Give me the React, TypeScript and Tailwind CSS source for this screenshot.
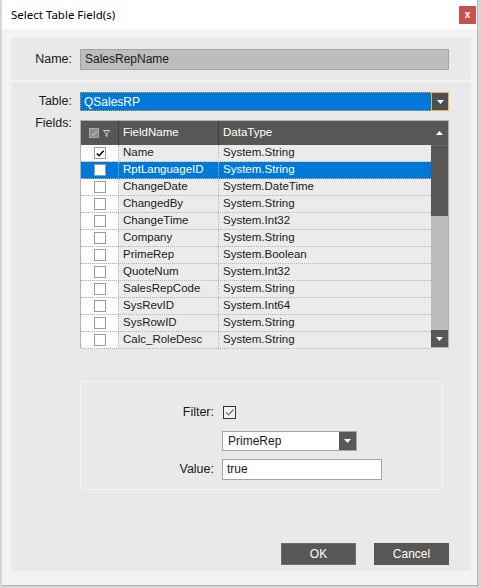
import React from 'react';

const rows: [string, string][] = [
  ['Name', 'System.String'],
  ['RptLanguageID', 'System.String'],
  ['ChangeDate', 'System.DateTime'],
  ['ChangedBy', 'System.String'],
  ['ChangeTime', 'System.Int32'],
  ['Company', 'System.String'],
  ['PrimeRep', 'System.Boolean'],
  ['QuoteNum', 'System.Int32'],
  ['SalesRepCode', 'System.String'],
  ['SysRevID', 'System.Int64'],
  ['SysRowID', 'System.String'],
  ['Calc_RoleDesc', 'System.String'],
];

const Check = ({ color = '#000', w = 1.6 }: { color?: string; w?: number }) => (
  <svg width="11" height="11" viewBox="0 0 11 11" className="block">
    <path d="M2 5.5 L4.5 8 L9.5 2.5" fill="none" stroke={color} strokeWidth={w} />
  </svg>
);

const Tri = ({ up = false }: { up?: boolean }) => (
  <svg width="7" height="4" viewBox="0 0 7 4" className="block">
    <path d={up ? 'M0 4 L3.5 0 L7 4 Z' : 'M0 0 L7 0 L3.5 4 Z'} fill="#fff" />
  </svg>
);

const Box = ({ checked }: { checked?: boolean }) => (
  <div className="w-[12px] h-[12px] bg-white border border-[#9a9a9a] flex items-center justify-center">
    {checked && <Check />}
  </div>
);

export default function App() {
  return (
    <div className="w-[481px] h-[588px] bg-[#d6d6d6] pl-[2px] font-['Liberation_Sans',Arial,sans-serif] text-[#1a1a1a]">
      <div className="w-[476px] h-[586px] bg-[#f3f3f5] border-r border-b border-[#b5b5b5] flex flex-col">
        {/* title bar */}
        <div className="h-[29px] bg-white flex items-center justify-between pl-[9px] pr-[1px] shrink-0">
          <span className="text-[11.5px] font-['Noto_Sans',sans-serif] text-black">Select Table Field(s)</span>
          <div className="w-[17px] h-[18px] bg-[#c85050] flex items-center justify-center text-white text-[10px] font-bold leading-none">x</div>
        </div>

        <div className="pl-[9px] pt-[9px] flex flex-col gap-[2px]">
          {/* name panel */}
          <div className="w-[460px] h-[42px] bg-[#e9e9e9] rounded-[3px] flex items-center">
            <span className="w-[61px] text-right text-[12.5px]">Name:</span>
            <div className="ml-[8px] w-[369px] h-[21px] bg-[#bdbdbd] border border-[#a3a3a3] flex items-center pl-[4px] text-[12px]">
              SalesRepName
            </div>
          </div>

          {/* main panel */}
          <div className="w-[460px] h-[489px] bg-[#e9e9e9] rounded-[3px] flex flex-col pt-[10px] pb-[6px]">
            <div className="flex items-center">
              <span className="w-[61px] text-right text-[12.5px]">Table:</span>
              <div className="ml-[8px] w-[369px] h-[19px] bg-[#0078d7] border border-dotted border-[#e0a040] flex items-center justify-between text-white text-[12px]">
                <span className="pl-[3px]">QSalesRP</span>
                <div className="w-[18px] h-[19px] -mr-px bg-[#4f4f4f] border border-[#e6b450] flex items-center justify-center">
                  <Tri />
                </div>
              </div>
            </div>

            <div className="flex mt-[9px]">
              <span className="w-[61px] text-right text-[12.5px] leading-none -mt-[3px]">Fields:</span>
              <div className="ml-[8px] w-[369px] h-[228px] border border-[#b0b0b0] flex">
                <div className="w-[350px] flex flex-col">
                  <div className="h-[24px] bg-[#595755] flex items-center text-white text-[11.5px] shrink-0">
                    <div className="w-[38px] h-full flex items-center justify-center gap-[4px] border-r border-[#3f3f3f]">
                      <div className="w-[10px] h-[10px] bg-[#8c8c8c] border border-[#a8a8a8] flex items-center justify-center">
                        <Check color="#d0d0d0" w={1.3} />
                      </div>
                      <svg width="7" height="7" viewBox="0 0 7 7" className="block">
                        <path d="M0.5 0.5 H6.5 L4 3.5 V6.5 L3 6 V3.5 Z" fill="none" stroke="#cfcfcf" strokeWidth="1" />
                      </svg>
                    </div>
                    <div className="w-[100px] h-full flex items-center pl-[4px] border-r border-[#3f3f3f]">FieldName</div>
                    <div className="flex-1 h-full flex items-center pl-[4px]">DataType</div>
                  </div>
                  {rows.map(([name, type], i) => {
                    const sel = i === 1;
                    return (
                      <div
                        key={name}
                        className={`h-[17px] flex items-center text-[11.5px] border-b border-dotted border-[#b4b4b4] ${sel ? 'bg-[#0078d7] text-white' : 'bg-[#ebebeb]'}`}
                      >
                        <div className={`w-[38px] h-full flex items-center justify-center border-r border-dotted border-[#b4b4b4] ${sel ? '' : 'bg-white'}`}>
                          <Box checked={i === 0} />
                        </div>
                        <div className="w-[100px] h-full flex items-center pl-[4px] border-r border-dotted border-[#b4b4b4]">{name}</div>
                        <div className="flex-1 h-full flex items-center pl-[4px]">{type}</div>
                      </div>
                    );
                  })}
                </div>
                <div className="w-[17px] flex flex-col bg-[#bdbdbd]">
                  <div className="h-[24px] bg-[#595755] flex items-center justify-center shrink-0">
                    <Tri up />
                  </div>
                  <div className="h-[71px] bg-[#595755] border-t border-[#6a6a6a]" />
                  <div className="flex-1" />
                  <div className="h-[17px] bg-[#595755] flex items-center justify-center">
                    <Tri />
                  </div>
                </div>
              </div>
            </div>

            {/* filter panel */}
            <div className="ml-[69px] mt-[33px] w-[363px] h-[109px] border border-[#f5f5f5] rounded-[2px] flex flex-col pt-[21px]">
              <div className="flex items-center">
                <span className="w-[133px] text-right text-[12.5px]">Filter:</span>
                <div className="ml-[9px] w-[13px] h-[13px] border border-[#333] flex items-center justify-center bg-[#f3f3f3]">
                  <Check color="#707070" w={1.2} />
                </div>
              </div>
              <div className="flex mt-[9px] ml-[141px]">
                <div className="w-[135px] h-[20px] bg-white border border-[#a3a3a3] flex items-center justify-between text-[12px]">
                  <span className="pl-[5px]">PrimeRep</span>
                  <div className="w-[17px] h-[18px] bg-[#595755] flex items-center justify-center">
                    <Tri />
                  </div>
                </div>
              </div>
              <div className="flex items-center mt-[8px]">
                <span className="w-[133px] text-right text-[12.5px]">Value:</span>
                <div className="ml-[8px] w-[160px] h-[21px] bg-white border border-[#a3a3a3] flex items-center pl-[4px] text-[12px]">true</div>
              </div>
            </div>

            <div className="mt-auto flex justify-end gap-[18px] pr-[22px]">
              <button className="w-[75px] h-[22px] bg-[#595755] border border-[#6e6e6e] text-white text-[12px]">OK</button>
              <button className="w-[75px] h-[22px] bg-[#595755] text-white text-[12px]">Cancel</button>
            </div>
          </div>
        </div>
      </div>
    </div>
  );
}
